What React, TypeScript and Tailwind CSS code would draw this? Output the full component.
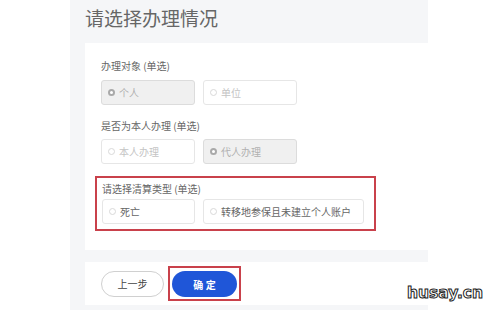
import React from "react";

const font = { fontFamily: '"Noto Sans CJK SC", "Noto Sans", sans-serif' };

function Radio({ checked }: { checked?: boolean }) {
  return checked ? (
    <span className="inline-block w-[7px] h-[7px] rounded-full border-[2px] border-[#a9a9a9] bg-white mr-[4px]" />
  ) : (
    <span className="inline-block w-[7px] h-[7px] rounded-full border border-[#d9d9d9] bg-white mr-[4px]" />
  );
}

function Option({ label, checked, w, dark }: { label: string; checked?: boolean; w: string; dark?: boolean }) {
  return (
    <div
      className={`${w} h-[25px] flex items-center px-[6px] rounded-[3px] border text-[10px] ${
        checked ? "bg-[#f0f0f0] border-[#dcdcdc] text-[#b0b0b0]" : "bg-white border-[#e6e6e6] text-[#c4c4c4]"
      } ${dark ? "!text-[#666]" : ""}`}
    >
      <Radio checked={checked} />
      {label}
    </div>
  );
}

export default function App() {
  return (
    <div className="w-[499px] h-[310px] bg-white flex overflow-hidden relative" style={font}>
      <div className="ml-[70px] w-[358px] h-full bg-[#f5f6f8] flex flex-col">
        <div className="h-[43px] pl-[15px] pt-[3px] text-[19px] text-[#666] leading-[30px]">请选择办理情况</div>
        <div className="ml-[15px] h-[207px] bg-white pt-[16px] pl-[16px]">
          <div className="text-[10px] text-[#666] leading-[14px]">办理对象 (单选)</div>
          <div className="flex gap-[8px] mt-[7px]">
            <Option label="个人" checked w="w-[94px]" />
            <Option label="单位" w="w-[94px]" />
          </div>
          <div className="text-[10px] text-[#666] leading-[14px] mt-[14px]">是否为本人办理 (单选)</div>
          <div className="flex gap-[8px] mt-[6px]">
            <Option label="本人办理" w="w-[94px]" />
            <Option label="代人办理" checked w="w-[94px]" />
          </div>
          <div className="-ml-[6px] mt-[12px] w-[281px] h-[55px] border-2 border-[#c9414b] pl-[5px] pt-[4px]">
            <div className="text-[10px] text-[#666] leading-[14px]">请选择清算类型 (单选)</div>
            <div className="flex gap-[8px] mt-[3px]">
              <Option label="死亡" w="w-[93px]" dark />
              <Option label="转移地参保且未建立个人账户" w="w-[161px]" dark />
            </div>
          </div>
        </div>
        <div className="h-[12px]" />
        <div className="ml-[15px] h-[43px] bg-white flex items-center pl-[16px] gap-[4px]">
          <button className="w-[63px] h-[26px] rounded-full border border-[#d0d0d0] bg-white text-[10px] text-[#444]">
            上一步
          </button>
          <div className="border-2 border-[#c9414b] p-[2px]">
            <button className="w-[65px] h-[26px] rounded-full bg-[#1f56d8] text-[10px] text-white font-bold">确 定</button>
          </div>
        </div>
      </div>
      <div
        className="absolute left-[407px] top-[282px] text-[15.5px] font-black text-white"
        style={{ fontFamily: '"DejaVu Sans", sans-serif', WebkitTextStroke: "1px #222" }}
      >
        husay.cn
      </div>
    </div>
  );
}
